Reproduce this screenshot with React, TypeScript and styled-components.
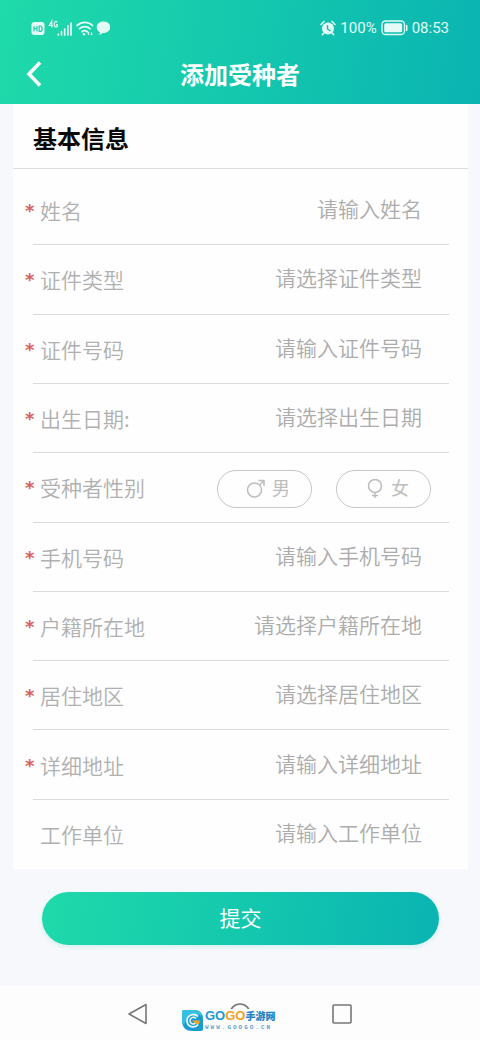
import React, { useState } from 'react';
import styled, { createGlobalStyle } from 'styled-components';

const GlobalStyle = createGlobalStyle`
  *, *::before, *::after { box-sizing: border-box; }
  body {
    margin: 0;
    background: #fdfdfe;
    font-family: Roboto, 'Noto Sans CJK SC', sans-serif;
  }
  button, input, select { font: inherit; }
`;

const brandGradient = 'linear-gradient(100deg, #1fdaaa 0%, #14c8ae 50%, #0ab4b2 100%)';

const Page = styled.div`
  display: flex;
  flex-direction: column;
  min-height: 100vh;
`;

const Header = styled.header`
  background: ${brandGradient};
  color: #fff;
`;

const StatusBar = styled.div`
  display: flex;
  align-items: center;
  justify-content: space-between;
  height: 44px;
  padding: 12px 31px 0 30px;
  font-size: 15px;
  line-height: 20px;
  color: #e4fbf5;
`;

const StatusGroup = styled.div`
  display: flex;
  align-items: center;
  gap: 4px;

  svg { display: block; }
`;

const TitleBar = styled.div`
  display: grid;
  grid-template-columns: 48px 1fr 48px;
  align-items: center;
  height: 60px;
  padding: 0 10px;
`;

const BackButton = styled.button`
  display: grid;
  place-items: center;
  height: 48px;
  padding: 0;
  border: 0;
  background: none;
  color: inherit;
`;

const Title = styled.h1`
  margin: 0;
  padding-top: 3px;
  font-size: 24px;
  line-height: 36px;
  font-weight: 700;
  text-align: center;
`;

const Form = styled.form`
  flex: 1;
  display: flex;
  flex-direction: column;
  padding: 0 12px 0 13px;
  background: #f7f8fc;
`;

const Card = styled.section`
  background: #fefefe;
`;

const SectionTitle = styled.h2`
  margin: 0;
  padding: 18px 20px 10px;
  border-bottom: 1px solid #dcdcdc;
  font-size: 24px;
  line-height: 36px;
  font-weight: 700;
  color: #0a0a0a;
`;

const Fields = styled.div`
  display: grid;
  grid-auto-rows: 1fr;
  min-height: 700px;
  padding: 7px 19px 0 20px;
`;

const Row = styled.div`
  display: flex;
  align-items: center;
  padding-right: 27px;
  font-size: 21px;
  line-height: 32px;
  color: #b0b0b0;

  &:not(:last-child) { border-bottom: 1px solid #dadada; }
`;

const Star = styled.span`
  width: 15px;
  margin-left: -8px;
  padding-top: 2px;
  font-family: 'DejaVu Sans', sans-serif;
  font-size: 18px;
  font-weight: 700;
  color: #d9605c;
`;

const LabelText = styled.label`
  flex: none;
  font-family: 'Noto Sans CJK SC', sans-serif;
  font-weight: 350;
`;

const TextField = styled.input`
  flex: 1;
  min-width: 0;
  height: 40px;
  padding: 0 0 4px;
  border: 0;
  outline: 0;
  background: none;
  text-align: right;
  font-family: 'Noto Sans CJK SC', sans-serif;
  font-weight: 350;
  color: #555;

  &::placeholder { color: #acacac; opacity: 1; }
`;

const SelectField = styled.select`
  flex: 1;
  min-width: 0;
  height: 40px;
  padding: 0 0 4px;
  border: 0;
  outline: 0;
  appearance: none;
  background: none;
  text-align: right;
  text-align-last: right;
  font-family: 'Noto Sans CJK SC', sans-serif;
  font-weight: 350;
  color: #acacac;
`;

const GenderGroup = styled.div`
  flex: 1;
  display: flex;
  justify-content: flex-end;
  gap: 24px;
  margin-right: -9px;
  padding-top: 4px;
`;

const GenderPill = styled.label<{ $active: boolean }>`
  position: relative;
  display: flex;
  align-items: center;
  justify-content: flex-end;
  gap: 6px;
  width: 95px;
  height: 38px;
  padding-right: 21px;
  border: 1px solid ${(p) => (p.$active ? '#14c8ae' : '#c6c6c6')};
  border-radius: 19px;
  font-size: 18px;
  color: ${(p) => (p.$active ? '#14c8ae' : '#bdbdbd')};
`;

const GenderRadio = styled.input`
  position: absolute;
  inset: 0;
  width: 100%;
  height: 100%;
  margin: 0;
  opacity: 0;
`;

const SubmitButton = styled.button`
  height: 53px;
  margin: 23px 29px 41px;
  border: 0;
  border-radius: 27px;
  background: ${brandGradient};
  box-shadow: 0 2px 5px rgba(20, 200, 174, 0.16);
  font-size: 21px;
  line-height: 32px;
  color: #fff;
`;

const SystemNav = styled.nav`
  position: relative;
  display: flex;
  justify-content: center;
  gap: 78px;
  height: 54px;
  padding-top: 14px;
  background: #fdfdfe;
`;

const NavButton = styled.button`
  width: 24px;
  height: 28px;
  padding: 0;
  border: 0;
  background: none;

  svg { display: block; }
`;

const Watermark = styled.div`
  position: absolute;
  top: 23px;
  left: 50%;
  display: flex;
  align-items: center;
  gap: 2px;
  margin-left: -58px;
`;

const WatermarkWords = styled.div`
  display: flex;
  flex-direction: column;
  gap: 1px;
  background: #fdfdfe;
`;

const Brand = styled.span`
  display: flex;
  align-items: center;
  height: 14px;
  font-family: 'Liberation Sans', sans-serif;
  font-size: 13px;
  line-height: 14px;
  font-weight: 700;
  white-space: nowrap;
`;

const BrandPart = styled.span<{ $color: string }>`
  color: ${(p) => p.$color};
`;

const BrandName = styled.span`
  font-family: 'Noto Sans CJK SC', sans-serif;
  font-size: 10px;
  font-weight: 900;
  color: #1b83c6;
`;

const BrandUrl = styled.span`
  font-family: 'Liberation Mono', monospace;
  font-size: 6px;
  line-height: 7px;
  font-weight: 700;
  letter-spacing: 2px;
  color: #5f9fc8;
`;

const NetworkIcons = () => (
  <svg width="80" height="18" viewBox="0 0 80 18" fill="none" aria-hidden="true">
    <rect x="1.500" y="3" width="13" height="13" rx="3" fill="#e4fbf5" />
    <path d="M4 7v5.500M7 7v5.500M4 9.700h3M9.200 7v5.500h1c2.500 0 2.500-5.500 0-5.500z" stroke="#1dd0a8" strokeWidth="1.200" />
    <path d="M21.800 8.500V2L19.300 6.500h3.700M27.300 3.200c-2-1.800-3 .1-3 2.200s1.300 3.200 3 2.100V5.600h-1.300" stroke="#e4fbf5" strokeWidth="1.200" />
    <path d="M28.300 16v-.8M31.500 16v-3.500M34.700 16v-6M37.900 16V6.500M41 16V4" stroke="#e4fbf5" strokeWidth="1.700" strokeLinecap="round" />
    <path d="M47 6.500c4.500-4.300 11.500-4.300 15.500 0M49.500 9.700c3-2.900 7.500-2.900 10.500 0M52 12.700c1.600-1.500 3.800-1.500 5.200 0" stroke="#e4fbf5" strokeWidth="1.800" strokeLinecap="round" />
    <circle cx="54" cy="15.300" r="1.300" fill="#e4fbf5" />
    <path d="M58.500 16v-3m-1.200 1.200l1.200-1.200 1 1M61.500 13v3m-1-1l1 1 1.200-1" stroke="#e4fbf5" strokeWidth=".9" />
    <path d="M73.500 2.500c-4 0-6.800 2.500-6.800 5.700 0 2.200 1.200 4 3.200 5l-.7 2.700 3.700-2c4.500.2 7.400-2.400 7.400-5.700S77.500 2.500 73.500 2.500z" fill="#e4fbf5" />
  </svg>
);

const AlarmIcon = () => (
  <svg width="16" height="16" viewBox="0 0 16 16" fill="none" aria-hidden="true">
    <circle cx="8" cy="8.500" r="6" fill="#e4fbf5" />
    <path d="M1 4.500L4 1.500M15 4.500l-3-3M3.800 13l-1.500 1.800M12.200 13l1.500 1.800" stroke="#e4fbf5" strokeWidth="1.500" strokeLinecap="round" />
    <path d="M7.500 5v4l3 2" stroke="#12bfb0" strokeWidth="1.400" />
  </svg>
);

const BatteryIcon = () => (
  <svg width="27" height="16" viewBox="0 0 27 16" fill="none" aria-hidden="true">
    <rect x="1" y="1" width="22.500" height="13.500" rx="3.500" stroke="#e4fbf5" strokeWidth="1.300" />
    <rect x="3.200" y="3.200" width="18" height="9" rx="1.500" fill="#e4fbf5" />
    <path d="M25.700 5.500v5" stroke="#e4fbf5" strokeWidth="1.500" strokeLinecap="round" />
  </svg>
);

const MaleIcon = () => (
  <svg width="20" height="20" viewBox="0 0 20 20" fill="none" stroke="currentColor" strokeWidth="1.500" aria-hidden="true">
    <circle cx="8.500" cy="11" r="7" />
    <path d="M13.500 6L18 1.500M12.500 1.500H18V7" />
  </svg>
);

const FemaleIcon = () => (
  <svg width="20" height="20" viewBox="0 0 20 20" fill="none" stroke="currentColor" strokeWidth="1.500" aria-hidden="true">
    <circle cx="10" cy="7" r="6.500" />
    <path d="M10 13.500V19M7 16.500h6" />
  </svg>
);

const BrandMark = () => (
  <svg width="21" height="21" viewBox="0 0 21 21" fill="none" aria-hidden="true">
    <path d="M0 2Q0 0 2 0h10c6 0 9 4 9 9v10q0 2-2 2H10C3 21 0 16 0 11z" fill="#1a9bd0" />
    <path d="M0 2Q0 0 2 0h10c5 0 8 3 9 7C14 2 5 5 2 15 0 13 0 11 0 9z" fill="#35bfe0" />
    <path d="M16 6.500c-4-4-11-1.500-11 4.300 0 6 7.500 8.200 11.200 3.700" stroke="#e9f8fc" strokeWidth="1.800" />
    <path d="M14 8.500c-2.400-2.400-6-.8-6 2.200 0 3.200 3.600 4.200 5.700 2.300" stroke="#e9f8fc" strokeWidth="1.500" />
    <path d="M10 10.500h8l-1 3.500h-3z" fill="#f5a623" />
  </svg>
);

type Field = {
  id: string;
  label: string;
  hint: string;
  required?: boolean;
  options?: string[];
};

const personFields: Field[] = [
  { id: 'name', label: '姓名', hint: '请输入姓名', required: true },
  { id: 'idType', label: '证件类型', hint: '请选择证件类型', required: true, options: ['居民身份证', '护照'] },
  { id: 'idNumber', label: '证件号码', hint: '请输入证件号码', required: true },
  { id: 'birthday', label: '出生日期:', hint: '请选择出生日期', required: true },
];

const contactFields: Field[] = [
  { id: 'phone', label: '手机号码', hint: '请输入手机号码', required: true },
  { id: 'household', label: '户籍所在地', hint: '请选择户籍所在地', required: true, options: ['本市', '外地'] },
  { id: 'district', label: '居住地区', hint: '请选择居住地区', required: true, options: ['城区', '郊区'] },
  { id: 'address', label: '详细地址', hint: '请输入详细地址', required: true },
  { id: 'employer', label: '工作单位', hint: '请输入工作单位' },
];

const FieldRow = ({ id, label, hint, required, options }: Field) => (
  <Row>
    <Star aria-hidden="true">{required ? '*' : ''}</Star>
    <LabelText htmlFor={id}>{label}</LabelText>
    {options ? (
      <SelectField id={id} name={id} defaultValue="">
        <option value="">{hint}</option>
        {options.map((o) => (
          <option key={o} value={o}>{o}</option>
        ))}
      </SelectField>
    ) : (
      <TextField id={id} name={id} type="text" placeholder={hint} />
    )}
  </Row>
);

const genders = [
  { value: 'male', text: '男', Icon: MaleIcon },
  { value: 'female', text: '女', Icon: FemaleIcon },
];

export default function App() {
  const [gender, setGender] = useState('');

  return (
    <Page>
      <GlobalStyle />
      <Header>
        <StatusBar>
          <StatusGroup>
            <NetworkIcons />
          </StatusGroup>
          <StatusGroup>
            <AlarmIcon />
            <span>100%</span>
            <BatteryIcon />
            <span>08:53</span>
          </StatusGroup>
        </StatusBar>
        <TitleBar>
          <BackButton type="button" aria-label="返回">
            <svg width="16" height="26" viewBox="0 0 16 26" fill="none" aria-hidden="true">
              <path d="M14 1.500L3 13l11 11.500" stroke="currentColor" strokeWidth="3.600" />
            </svg>
          </BackButton>
          <Title>添加受种者</Title>
        </TitleBar>
      </Header>

      <Form onSubmit={(e) => e.preventDefault()}>
        <Card>
          <SectionTitle>基本信息</SectionTitle>
          <Fields>
            {personFields.map((f) => <FieldRow key={f.id} {...f} />)}
            <Row role="radiogroup" aria-labelledby="gender-label">
              <Star aria-hidden="true">*</Star>
              <LabelText as="span" id="gender-label">受种者性别</LabelText>
              <GenderGroup>
                {genders.map(({ value, text, Icon }) => (
                  <GenderPill key={value} $active={gender === value}>
                    <GenderRadio
                      type="radio"
                      name="gender"
                      value={value}
                      checked={gender === value}
                      onChange={() => setGender(value)}
                    />
                    <Icon />
                    {text}
                  </GenderPill>
                ))}
              </GenderGroup>
            </Row>
            {contactFields.map((f) => <FieldRow key={f.id} {...f} />)}
          </Fields>
        </Card>
        <SubmitButton type="submit">提交</SubmitButton>
      </Form>

      <SystemNav>
        <NavButton type="button" aria-label="后退">
          <svg width="24" height="28" viewBox="0 0 24 28" fill="none" stroke="#777" strokeWidth="1.600" strokeLinejoin="round" aria-hidden="true">
            <path d="M20 4.500v19L3 14z" />
          </svg>
        </NavButton>
        <NavButton type="button" aria-label="主屏幕">
          <svg width="24" height="28" viewBox="0 0 24 28" fill="none" stroke="#777" strokeWidth="1.600" aria-hidden="true">
            <circle cx="12" cy="14" r="10" />
          </svg>
        </NavButton>
        <NavButton type="button" aria-label="最近任务">
          <svg width="24" height="28" viewBox="0 0 24 28" fill="none" stroke="#777" strokeWidth="1.600" aria-hidden="true">
            <rect x="3" y="5" width="18" height="18" rx="1" />
          </svg>
        </NavButton>
        <Watermark>
          <BrandMark />
          <WatermarkWords>
            <Brand>
              <BrandPart $color="#1a9bd8">GO</BrandPart>
              <BrandPart $color="#f5a01e">GO</BrandPart>
              <BrandName>手游网</BrandName>
            </Brand>
            <BrandUrl>WWW.GOOGO.CN</BrandUrl>
          </WatermarkWords>
        </Watermark>
      </SystemNav>
    </Page>
  );
}
